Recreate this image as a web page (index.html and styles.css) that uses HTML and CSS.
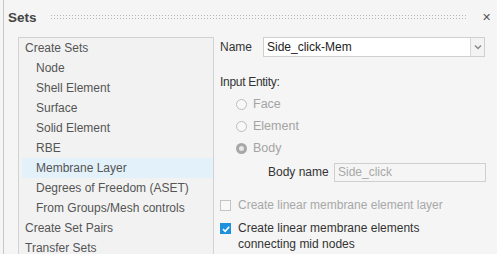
FILE: index.html
```html
<!DOCTYPE html>
<html lang="en">
<head>
    <meta charset="UTF-8">
    <meta name="viewport" content="width=device-width, initial-scale=1.0">
    <title>Sets</title>
    <link rel="stylesheet" href="styles.css">
</head>
<body>
<div class="window">
    <div class="titlebar">
        <span class="title">Sets</span>
        <div class="grip"></div>
        <span class="close">&#x2715;</span>
    </div>
    <div class="content">
        <div class="tree">
            <div class="row top">Create Sets</div>
            <div class="row child">Node</div>
            <div class="row child">Shell Element</div>
            <div class="row child">Surface</div>
            <div class="row child">Solid Element</div>
            <div class="row child">RBE</div>
            <div class="row child selected">Membrane Layer</div>
            <div class="row child">Degrees of Freedom (ASET)</div>
            <div class="row child">From Groups/Mesh controls</div>
            <div class="row top">Create Set Pairs</div>
            <div class="row top">Transfer Sets</div>
        </div>
        <div class="form">
            <div class="name-row">
                <span class="label">Name</span>
                <div class="combo">
                    <div class="combo-text">Side_click-Mem</div>
                    <div class="combo-btn">
                        <svg width="8" height="6" viewBox="0 0 8 6"><path d="M1 1.5 L4 4.5 L7 1.5" fill="none" stroke="#888" stroke-width="1.4"/></svg>
                    </div>
                </div>
            </div>
            <div class="section">Input Entity:</div>
            <div class="radio"><span class="dot"></span>Face</div>
            <div class="radio"><span class="dot"></span>Element</div>
            <div class="radio"><span class="dot on"></span>Body</div>
            <div class="body-row">
                <span class="label">Body name</span>
                <div class="field">Side_click</div>
            </div>
            <div class="check disabled"><span class="box"></span>Create linear membrane element layer</div>
            <div class="check">
                <span class="box on">
                    <svg width="10" height="10" viewBox="0 0 10 10"><path d="M2 5.2 L4.2 7.3 L8.2 2.8" fill="none" stroke="#fff" stroke-width="1.6"/></svg>
                </span>
                <span>Create linear membrane elements<br>connecting mid nodes</span>
            </div>
        </div>
    </div>
</div>
</body>
</html>
```

FILE: styles.css
```css
body {
    margin: 0;
    background: #f5f5f5;
    font-family: "Liberation Sans", Arial, sans-serif;
    font-size: 12px;
    color: #333;
}
.window {
    margin-left: 3px;
    border-left: 1px solid #c8c8c8;
    height: 254px;
    overflow: hidden;
}
.titlebar {
    display: flex;
    align-items: center;
    height: 20px;
    margin-top: 7px;
    padding-left: 4px;
}
.title {
    font-size: 13.5px;
    font-weight: bold;
    color: #444;
}
.grip {
    flex: 1;
    height: 6px;
    margin: 0 14px 0 13px;
    background-image: radial-gradient(circle, #b4b4b4 0.8px, transparent 1px);
    background-size: 3px 3px;
}
.close {
    font-size: 11px;
    color: #555;
    margin-right: 6px;
}
.content {
    display: flex;
    margin-top: 10px;
}
.tree {
    width: 194px;
    margin-left: 14px;
    border: 1px solid #d2d2d2;
    border-bottom: none;
    height: 240px;
    background: #f2f2f2;
}
.row {
    height: 20px;
    line-height: 20px;
    color: #555;
    white-space: nowrap;
}
.row.top {
    padding-left: 6px;
}
.row.child {
    padding-left: 17px;
}
.row.selected {
    background: #e3f1fa;
    margin-left: 3px;
    padding-left: 14px;
}
.form {
    flex: 1;
    padding-left: 6px;
}
.label {
    color: #333;
}
.name-row {
    display: flex;
    align-items: center;
    height: 20px;
}
.name-row .label {
    width: 43px;
}
.combo {
    display: flex;
    width: 222px;
    height: 20px;
    border: 1px solid #cfcfcf;
    box-sizing: border-box;
    background: #fff;
}
.combo-text {
    flex: 1;
    line-height: 18px;
    padding-left: 3px;
    color: #222;
}
.combo-btn {
    width: 13px;
    border-left: 1px solid #d8d8d8;
    background: #f3f3f3;
    display: flex;
    align-items: center;
    justify-content: center;
}
.section {
    margin-top: 16px;
    height: 18px;
    line-height: 18px;
    color: #333;
    letter-spacing: -0.3px;
}
.radio {
    display: flex;
    align-items: center;
    height: 22px;
    padding-left: 16px;
    color: #a4a4a4;
    font-size: 12.5px;
}
.section + .radio {
    margin-top: 2px;
}
.dot {
    width: 11px;
    height: 11px;
    border: 1px solid #bdbdbd;
    border-radius: 50%;
    box-sizing: border-box;
    margin-right: 6px;
    background: #f8f8f8;
}
.dot.on {
    border: 3px solid #a8a8a8;
    background: #e8e8e8;
}
.body-row {
    display: flex;
    align-items: center;
    margin-top: 3px;
    padding-left: 48px;
    height: 20px;
}
.body-row .label {
    width: 66px;
}
.field {
    width: 152px;
    height: 19px;
    border: 1px solid #cfcfcf;
    box-sizing: border-box;
    line-height: 17px;
    padding-left: 3px;
    color: #a8a8a8;
    background: #f5f5f5;
}
.check {
    display: flex;
    align-items: flex-start;
    margin-top: 15px;
    line-height: 16px;
    color: #333;
}
.check.disabled {
    color: #a8a8a8;
}
.check + .check {
    margin-top: 7px;
}
.box {
    width: 11px;
    height: 11px;
    border: 1px solid #c4c4c4;
    box-sizing: border-box;
    margin: 3px 7px 0 0;
    flex: none;
    display: flex;
    align-items: center;
    justify-content: center;
    background: #f8f8f8;
}
.box.on {
    border: none;
    background: #1e90e0;
}
```
